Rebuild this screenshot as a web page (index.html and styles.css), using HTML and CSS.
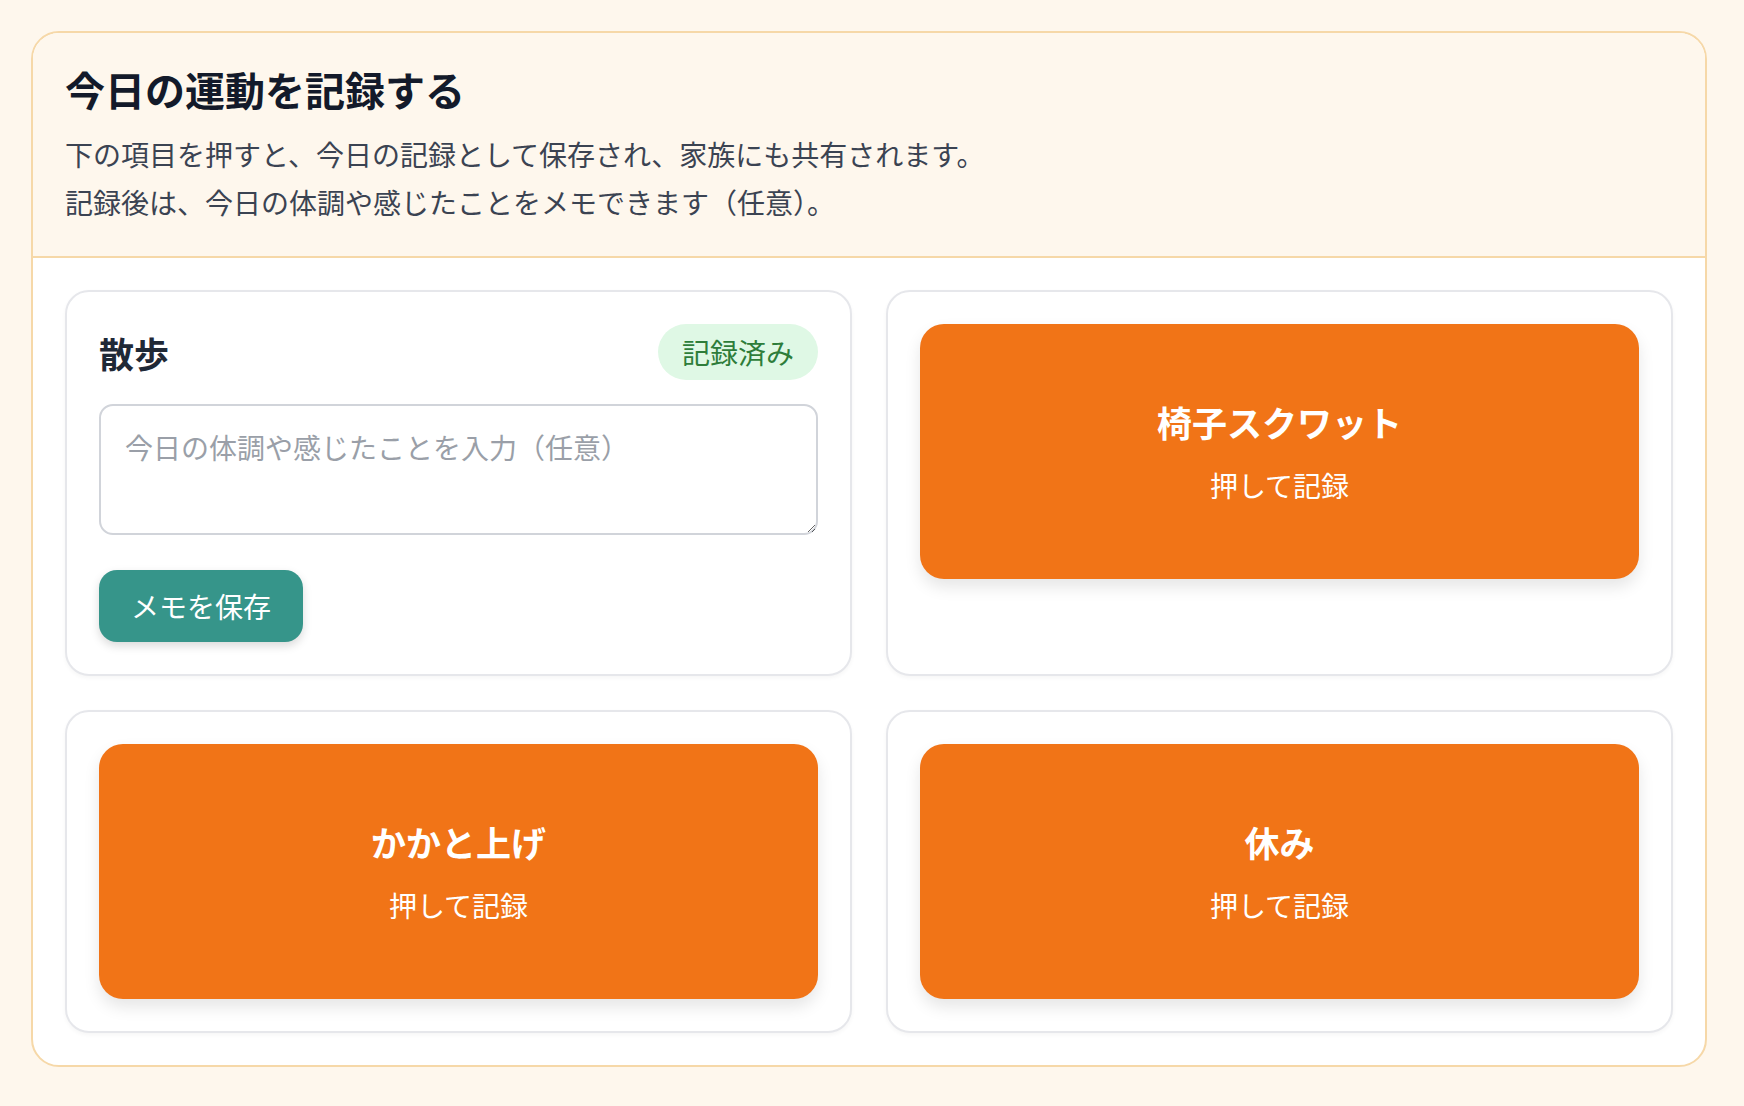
FILE: index.html
```html
<!DOCTYPE html>
<html lang="ja">
<head>
<meta charset="UTF-8">
<meta name="viewport" content="width=device-width, initial-scale=1.0">
<title>今日の運動を記録する</title>
<link rel="stylesheet" href="styles.css">
</head>
<body>
<div class="page">
    <div class="panel">
        <div class="panel-head">
            <h1 class="panel-title">今日の運動を記録する</h1>
            <p class="panel-desc">下の項目を押すと、今日の記録として保存され、家族にも共有されます。<br>記録後は、今日の体調や感じたことをメモできます（任意）。</p>
        </div>
        <div class="panel-body">
            <div class="item">
                <div class="item-head">
                    <span class="item-name">散歩</span>
                    <span class="badge">記録済み</span>
                </div>
                <textarea class="memo" placeholder="今日の体調や感じたことを入力（任意）"></textarea>
                <button class="save-btn">メモを保存</button>
            </div>
            <div class="item">
                <button class="record-btn">
                    <span class="record-name">椅子スクワット</span>
                    <span class="record-sub">押して記録</span>
                </button>
            </div>
            <div class="item">
                <button class="record-btn">
                    <span class="record-name">かかと上げ</span>
                    <span class="record-sub">押して記録</span>
                </button>
            </div>
            <div class="item">
                <button class="record-btn">
                    <span class="record-name">休み</span>
                    <span class="record-sub">押して記録</span>
                </button>
            </div>
        </div>
    </div>
</div>
</body>
</html>
```

FILE: styles.css
```css
* {
    box-sizing: border-box;
}
body {
    margin: 0;
    background: #fef7ed;
    font-family: "Noto Sans CJK JP", "Noto Sans", sans-serif;
    color: #1a2232;
}
.page {
    padding: 31px;
}
.panel {
    max-width: 1676px;
    border: 2px solid #f6d8a8;
    border-radius: 28px;
    background: #fff;
    overflow: hidden;
}
.panel-head {
    background: #fef7ed;
    border-bottom: 2px solid #f6d8a8;
    padding: 30px 32px 30px;
}
.panel-title {
    margin: 0 0 15px;
    font-size: 40px;
    line-height: 52px;
    font-weight: 700;
    color: #131a2a;
}
.panel-desc {
    margin: 0;
    font-size: 28px;
    line-height: 48px;
    color: #3b4352;
}
.panel-body {
    padding: 32px;
    display: grid;
    grid-template-columns: 1fr 1fr;
    gap: 34px;
}
.item {
    border: 2px solid #e6e7eb;
    border-radius: 24px;
    padding: 32px;
    background: #fff;
    box-shadow: 0 2px 4px rgba(0, 0, 0, 0.04);
}
.item-head {
    display: flex;
    justify-content: space-between;
    align-items: center;
}
.item-name {
    font-size: 35px;
    font-weight: 700;
    color: #1f2937;
}
.badge {
    background: #dff8e5;
    color: #2e7d3a;
    font-size: 28px;
    line-height: 40px;
    padding: 8px 24px;
    border-radius: 999px;
}
.memo {
    display: block;
    width: 100%;
    height: 131px;
    margin-top: 24px;
    border: 2px solid #d1d4da;
    border-radius: 14px;
    padding: 20px 24px;
    font-family: inherit;
    font-size: 28px;
    line-height: 1.5;
    color: #1f2937;
    resize: vertical;
}
.memo::placeholder {
    color: #9a9fa8;
}
.save-btn {
    display: block;
    margin-top: 35px;
    border: none;
    border-radius: 18px;
    padding: 16px 32px;
    background: #36958a;
    color: #fff;
    font-family: inherit;
    font-size: 28px;
    line-height: 40px;
    box-shadow: 0 4px 10px rgba(0, 0, 0, 0.15);
}
.record-btn {
    width: 100%;
    height: 255px;
    border: none;
    border-radius: 24px;
    background: #f17417;
    color: #fff;
    font-family: inherit;
    display: flex;
    flex-direction: column;
    align-items: center;
    justify-content: center;
    box-shadow: 0 8px 16px rgba(0, 0, 0, 0.1);
}
.record-name {
    font-size: 35px;
    font-weight: 700;
    line-height: 1.4;
}
.record-sub {
    margin-top: 18px;
    font-size: 28px;
    line-height: 1.5;
}
```
